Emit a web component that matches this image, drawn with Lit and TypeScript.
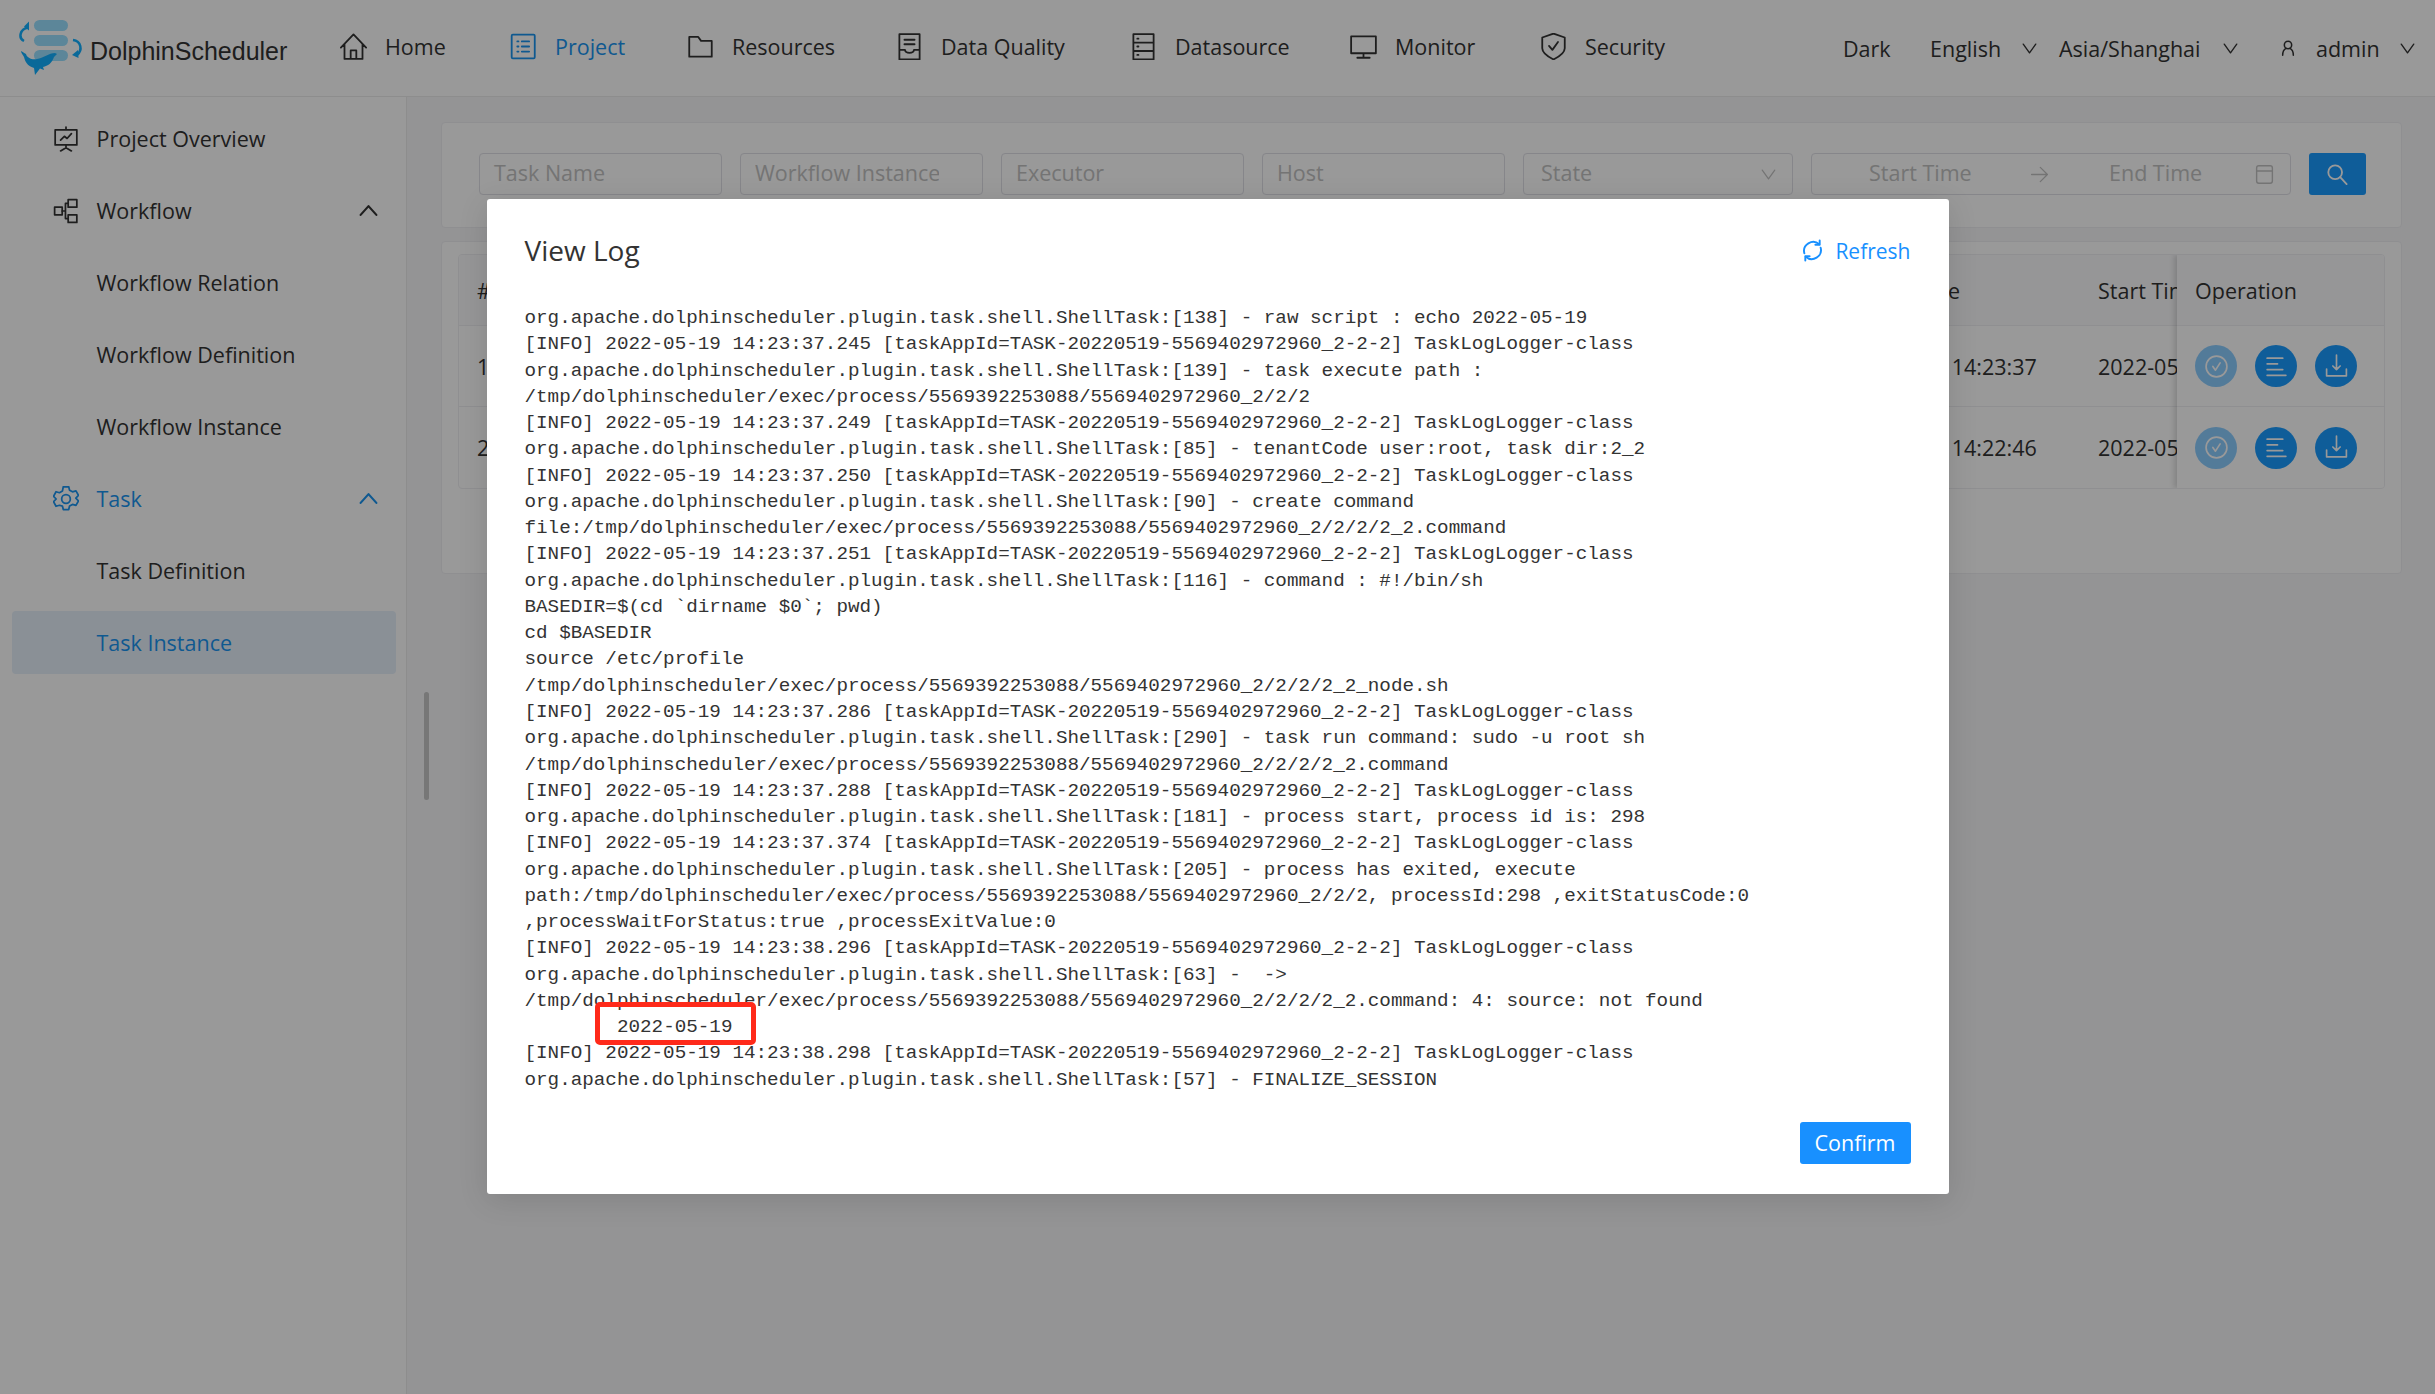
import { LitElement, html, css, svg } from "lit";
import { customElement } from "lit/decorators.js";

const ICONS: Record<string, any> = {
  home: svg`<path d="M.8 13 12 1.200 23.200 13M4 10v13h16V10M9.500 23v-7.500h5V23"/>`,
  project: svg`<rect x="1.500" y="1.500" width="20.500" height="21" rx="1"/><path d="M10.500 7.500h6.500M10.500 12h6.500M10.500 16.500h6.500M6.500 7.500h1M6.500 12h1M6.500 16.500h1"/>`,
  folder: svg`<path d="M2 3.500h8l2.500 3.500H22v14H2z"/>`,
  quality: svg`<path d="M3 1h18v22.500H3zM7.500 6h9M7.500 10h9M3 15h5c.5 3.500 7.500 3.500 8 0h5"/>`,
  source: svg`<path d="M3 1h18v22.500H3zM3 8.500h18M3 16h18M6.500 5h1M6.500 12h1M6.500 19.500h1"/>`,
  monitor: svg`<path d="M1 3h22v15H1zM12 18v3.500M6.500 22h11"/>`,
  shield: svg`<path d="M12 .5 22 4v9.500c0 4.500-5 7.500-10 10-5-2.500-10-5.500-10-10V4z"/><path d="m8 11.500 3 3.500 5-7"/>`,
  overview: svg`<path d="M12 1v2M2 3.500h20v14H2zM12 17.500V20M7 23l5-3 5 3M7 13l3.500-3.500 2.500 2L17 7"/>`,
  flow: svg`<rect x="1.500" y="8.500" width="7" height="7"/><rect x="14" y="1.500" width="8" height="7"/><rect x="14" y="15.500" width="8" height="7"/><path d="M8.500 12h3M11.500 5v14M11.500 5H14M11.500 19H14"/>`,
  gear: svg`<path d="M9.500 1.500h5l.8 3.200 2.700 1.500 3.200-.9 2.300 4.200-2.400 2.500 2.400 2.500-2.300 4.200-3.200-.9-2.700 1.500-.8 3.200h-5l-.8-3.200L6 18.600l-3.200.9L.5 15.300 2.900 12.800.5 10.300l2.300-4.200 3.200.9 2.700-1.500z" transform="translate(0 -.8)"/><circle cx="12" cy="12" r="4"/>`,
  up: svg`<path d="m3 17 9-10 9 10"/>`,
  chev: svg`<path d="m2 5 10 14L22 5"/>`,
  user: svg`<circle cx="12" cy="7.500" r="5.500"/><path d="M4 23c0-5 2-9 5-10.500M20 23c0-5-2-9-5-10.500"/>`,
  refresh: svg`<path d="M3.500 15A9.500 9.500 0 0 1 19 5.500M20.500 9A9.500 9.500 0 0 1 5 18.500"/><path d="M15 6h4.500V1.500M9 18H4.500v4.500" stroke-width="2"/>`,
  search: svg`<circle cx="10" cy="10" r="7.500"/><path d="m15.500 15.500 7 7.500"/>`,
  arrow: svg`<path d="M2 12h20M13 3l9 9-9 9"/>`,
  cal: svg`<rect x="3" y="2" width="18" height="20" rx="2.500"/><path d="M3 8h18"/>`,
  view: svg`<circle cx="12" cy="12" r="10"/><path d="m8.500 12 2.500 3.500 4.500-7"/>`,
  log: svg`<path d="M3 4h15M3 9.500h10M3 15h15M3 20.500h18"/>`,
  dl: svg`<path d="M12 1v14M8.500 11.500 12 15l3.500-3.500M2.500 14.500V21h19v-6.500"/>`,
};
const ic = (n: string, cls = "") =>
  html`<svg class="ic ${cls}" viewBox="0 0 24 24" fill="none" stroke="currentColor" stroke-width="1.6" stroke-linejoin="round" stroke-linecap="round">${ICONS[n]}</svg>`;

const P = "org.apache.dolphinscheduler.plugin.task.shell.ShellTask:";
const info = (t: string) =>
  `[INFO] 2022-05-19 14:23:${t} [taskAppId=TASK-20220519-5569402972960_2-2-2] TaskLogLogger-class`;
const D = "/tmp/dolphinscheduler/exec/process/5569392253088/5569402972960_2/2/2";
const LOG_HEAD = [
  `${P}[138] - raw script : echo 2022-05-19`,
  info("37.245"),
  `${P}[139] - task execute path :`,
  D,
  info("37.249"),
  `${P}[85] - tenantCode user:root, task dir:2_2`,
  info("37.250"),
  `${P}[90] - create command`,
  `file:${D}/2_2.command`,
  info("37.251"),
  `${P}[116] - command : #!/bin/sh`,
  "BASEDIR=$(cd `dirname $0`; pwd)",
  "cd $BASEDIR",
  "source /etc/profile",
  `${D}/2_2_node.sh`,
  info("37.286"),
  `${P}[290] - task run command: sudo -u root sh`,
  `${D}/2_2.command`,
  info("37.288"),
  `${P}[181] - process start, process id is: 298`,
  info("37.374"),
  `${P}[205] - process has exited, execute`,
  `path:${D}, processId:298 ,exitStatusCode:0`,
  ",processWaitForStatus:true ,processExitValue:0",
  info("38.296"),
  `${P}[63] -  ->`,
  `${D}/2_2.command: 4: source: not found`,
];
const LOG_TAIL = [info("38.298"), `${P}[57] - FINALIZE_SESSION`];

const NAV = [
  ["home", "Home"],
  ["project", "Project"],
  ["folder", "Resources"],
  ["quality", "Data Quality"],
  ["source", "Datasource"],
  ["monitor", "Monitor"],
  ["shield", "Security"],
];

@customElement("app-root")
export class AppRoot extends LitElement {
  static styles = css`
    :host {
      display: block;
      width: 2435px;
      height: 1394px;
      overflow: hidden;
      position: relative;
      font-family: "Open Sans", "Noto Sans", sans-serif;
      font-size: 21.500px;
      color: #333;
      background: #f7f7f9;
    }
    .ic { display: block; flex: none; }
    header {
      height: 97px;
      box-sizing: border-box;
      background: #fff;
      border-bottom: 1px solid #ececec;
      display: flex;
      align-items: center;
    }
    .logo { width: 340px; flex: none; display: flex; align-items: center; height: 97px; padding-left: 18px; box-sizing: border-box; }
    .logo svg { width: 68px; height: 56px; margin-top: -1px; flex: none; }
    .logo span { font-family: "Liberation Sans", sans-serif; font-size: 25px; color: #333; margin: 6px 0 0 4px; white-space: nowrap; }
    nav { display: grid; grid-template-columns: 170px 177px 209px 234px 220px 190px 303px; width: 1503px; flex: none; margin-top: -4px; }
    .nav-item { display: flex; align-items: center; }
    .nav-item .ic { width: 27px; height: 27px; }
    .nav-item .slot { width: 45px; flex: none; }
    .nav-item.on { color: #1a94f0; }
    .tools { display: flex; align-items: center; white-space: nowrap; height: 97px; }
    .tools .t { display: block; }
    .ch { width: 15px; height: 15px; stroke-width: 2.200; }
    .dark { width: 87px; }
    .en { width: 92px; }
    .ch1 { margin-right: 22px; }
    .asia { width: 164px; }
    .ch2 { margin-right: 42px; }
    .user { width: 16px; height: 18px; margin-right: 20px; stroke-width: 2.300; }
    .adm { width: 84px; }

    .body { display: flex; height: 1297px; }
    aside {
      width: 407px;
      box-sizing: border-box;
      background: #fff;
      border-right: 1px solid #ececec;
      padding: 10px 10px 0 12px;
      flex: none;
    }
    .side { height: 63px; margin-bottom: 9px; display: flex; align-items: center; border-radius: 4px; padding-left: 84.500px; position: relative; }
    .side span { margin-top: -1px; }
    .side .si { position: absolute; left: 41px; top: 19px; width: 26px; height: 26px; }
    .side .up { position: absolute; left: 346px; top: 21px; width: 21px; height: 21px; stroke-width: 2.500; }
    .side.blue { color: #1a94f0; }
    .side.sel { background: #e6f0fb; color: #1a94f0; }
    .thumb { position: absolute; left: 424px; top: 692px; width: 5px; height: 108px; border-radius: 3px; background: #c6c6c6; }

    main { flex: 1; padding: 25px 33px 0 34px; min-width: 0; }
    .card { background: #fff; border: 1px solid #efeff2; border-radius: 4px; box-sizing: border-box; }
    .filters { height: 106px; padding: 30px 0 0 37px; display: flex; gap: 18px; margin-bottom: 13px; }
    .inp { height: 42px; width: 243px; box-sizing: border-box; border: 1px solid #e0e0e6; border-radius: 4px; color: #c2c2c2; display: flex; align-items: center; padding: 0 0 3px 14px; position: relative; white-space: nowrap; overflow: hidden; }
    .inp .cut { display: block; max-width: 184px; overflow: hidden; }
    .inp.state { width: 270px; padding-left: 17px; }
    .inp.state .ic { position: absolute; left: 237px; top: 13px; width: 15px; height: 15px; stroke-width: 2; }
    .inp.date { width: 480px; padding: 0; }
    .inp.date span { position: absolute; top: 4px; }
    .inp.date .ar { position: absolute; left: 218px; top: 11px; width: 19px; height: 19px; }
    .inp.date .cal { position: absolute; left: 442px; top: 9px; width: 21px; height: 23px; }
    .sbtn { width: 57px; height: 42px; background: #1a9cff; color: #fff; border-radius: 3px; display: flex; align-items: center; justify-content: center; }
    .sbtn .ic { width: 22px; height: 22px; stroke-width: 2; margin-left: -1px; }
    .tcard { height: 333px; padding: 12px 16px; }
    .table { height: 235px; border: 1px solid #efeff2; border-radius: 4px; display: flex; box-sizing: border-box; overflow: hidden; }
    .scroll { flex: 1; min-width: 0; overflow: hidden; display: grid; grid-template-columns: 1357px 264px 200px; grid-template-rows: 71px 81px 81px; white-space: nowrap; }
    .cell { display: flex; align-items: center; padding-left: 18px; border-bottom: 1px solid #efeff2; }
    .cell.last { border-bottom: none; }
    .cell.h { background: #fafafc; }
    .fixed { width: 207px; flex: none; display: grid; grid-template-rows: 71px 81px 81px; box-shadow: -3px 0 5px rgba(0, 0, 0, 0.14); background: #fff; position: relative; }
    .fixed .cell { gap: 18px; }
    .rb { width: 42px; height: 42px; border-radius: 50%; background: #1a9cff; color: #fff; display: flex; align-items: center; justify-content: center; }
    .rb.off { opacity: 0.5; }
    .rb .ic { width: 25px; height: 25px; }

    .mask { position: absolute; inset: 0; background: rgba(0, 0, 0, 0.4); display: flex; justify-content: center; align-items: flex-start; padding-top: 199px; box-sizing: border-box; }
    .modal { width: 1462px; height: 995px; background: #fff; border-radius: 3px; box-shadow: 0 6px 30px rgba(0, 0, 0, 0.12); box-sizing: border-box; padding: 0 38px 0 38px; display: flex; flex-direction: column; }
    .mh { height: 106px; flex: none; display: flex; align-items: center; justify-content: space-between; }
    .mh h2 { font-size: 28px; font-weight: 400; margin: -4px 0 0; color: #333; }
    .rf { color: #1890ff; display: flex; align-items: center; gap: 11px; margin-top: -3px; font-size: 21px; }
    .rf .ic { width: 23px; height: 23px; stroke-width: 2; }
    pre { margin: 0; font-family: "Liberation Mono", "DejaVu Sans Mono", monospace; font-size: 19.250px; line-height: 26.270px; color: #333; height: 817px; flex: none; }
    .dt { position: relative; display: inline-block; }
    .dt::after { content: ""; position: absolute; left: -22px; right: -24px; top: -12px; bottom: -5px; border: 5px solid #ff2a1a; border-radius: 5px; box-sizing: border-box; }
    .mf { display: flex; justify-content: flex-end; }
    .ok { width: 111px; height: 42px; background: #1890ff; color: #fff; border-radius: 3px; display: flex; align-items: center; justify-content: center; padding-bottom: 2px; box-sizing: border-box; }
  `;

  private side(label: string, opts: { icon?: string; up?: boolean; cls?: string } = {}) {
    return html`<div class="side ${opts.cls ?? ""}">
      ${opts.icon ? ic(opts.icon, "si") : ""}
      <span>${label}</span>
      ${opts.up ? ic("up", "up") : ""}
    </div>`;
  }

  private logo() {
    return html`<svg viewBox="0 0 68 56" fill="none">
      <rect x="16" y="0" width="34" height="11" rx="5.500" fill="#99e0ff"/>
      <rect x="16" y="15" width="34" height="11" rx="5.500" fill="#99e0ff"/>
      <rect x="16" y="30" width="34" height="11" rx="5.500" fill="#99e0ff"/>
      <path d="M10 7.500C2 9 0 18 6 21" stroke="#12b0ff" stroke-width="2.500"/>
      <path d="m11 1.500-5 5 5 4z" fill="#12b0ff"/>
      <path d="M55 20c8 1 10 10 4 15" stroke="#12b0ff" stroke-width="2.500"/>
      <path d="m54 35 6-5 .5 8z" fill="#12b0ff"/>
      <path d="M3 31c2 1 3 2 5 3 1 4 6 6 11 5 6-1 12-6 18-6l2 1-3 3c-2 6-6 9-11 10l1 3-4-1.500-5 6.500-1-7C9 46 7 41 6 37c-1-2-3-4-3-6z" fill="#12b0ff"/>
    </svg>`;
  }

  private opCell(last = false) {
    return html`<div class="cell ${last ? "last" : ""}">
      <div class="rb off">${ic("view")}</div>
      <div class="rb">${ic("log")}</div>
      <div class="rb">${ic("dl")}</div>
    </div>`;
  }

  render() {
    return html`
      <header>
        <div class="logo">${this.logo()}<span>DolphinScheduler</span></div>
        <nav>
          ${NAV.map(
            ([i, l]) => html`<div class="nav-item ${l === "Project" ? "on" : ""}">
              <div class="slot">${ic(i)}</div>
              <span>${l}</span>
            </div>`
          )}
        </nav>
        <div class="tools">
          <span class="t dark">Dark</span>
          <span class="t en">English</span>${ic("chev", "ch ch1")}
          <span class="t asia">Asia/Shanghai</span>${ic("chev", "ch ch2")}
          ${ic("user", "user")}
          <span class="t adm">admin</span>${ic("chev", "ch")}
        </div>
      </header>
      <div class="body">
        <aside>
          ${this.side("Project Overview", { icon: "overview" })}
          ${this.side("Workflow", { icon: "flow", up: true })}
          ${this.side("Workflow Relation")}
          ${this.side("Workflow Definition")}
          ${this.side("Workflow Instance")}
          ${this.side("Task", { icon: "gear", up: true, cls: "blue" })}
          ${this.side("Task Definition")}
          ${this.side("Task Instance", { cls: "sel" })}
        </aside>
        <main>
          <div class="card filters">
            <div class="inp">Task Name</div>
            <div class="inp"><span class="cut">Workflow Instance</span></div>
            <div class="inp">Executor</div>
            <div class="inp">Host</div>
            <div class="inp state">State${ic("chev")}</div>
            <div class="inp date">
              <span style="left:57px">Start Time</span>
              ${ic("arrow", "ar")}
              <span style="left:297px">End Time</span>
              ${ic("cal", "cal")}
            </div>
            <div class="sbtn">${ic("search")}</div>
          </div>
          <div class="card tcard">
            <div class="table">
              <div class="scroll">
                <div class="cell h">#</div><div class="cell h">Submit Time</div><div class="cell h">Start Time</div>
                <div class="cell">1</div><div class="cell">2022-05-19 14:23:37</div><div class="cell">2022-05-19 14:23:37</div>
                <div class="cell last">2</div><div class="cell last">2022-05-19 14:22:46</div><div class="cell last">2022-05-19 14:22:46</div>
              </div>
              <div class="fixed">
                <div class="cell h">Operation</div>
                ${this.opCell()}
                ${this.opCell(true)}
              </div>
            </div>
          </div>
        </main>
      </div>
      <div class="thumb"></div>
      <div class="mask">
        <div class="modal">
          <div class="mh">
            <h2>View Log</h2>
            <div class="rf">${ic("refresh")}<span>Refresh</span></div>
          </div>
          <pre>${LOG_HEAD.join("\n")}
        <span class="dt">2022-05-19</span>
${LOG_TAIL.join("\n")}</pre>
          <div class="mf"><div class="ok">Confirm</div></div>
        </div>
      </div>
    `;
  }
}
